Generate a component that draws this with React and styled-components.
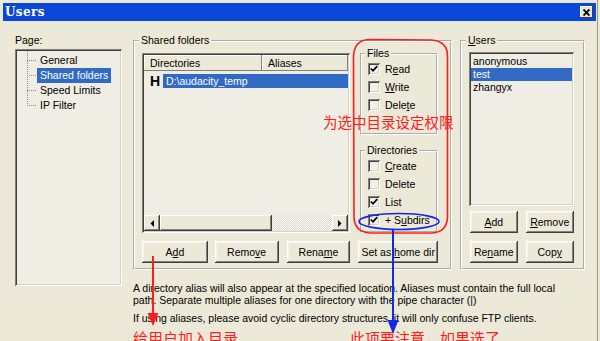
import React from 'react';
import styled, { createGlobalStyle } from 'styled-components';

const FONT = `"Liberation Sans", Arial, sans-serif`;
const CJK = `"Noto Sans CJK SC", "Noto Sans", sans-serif`;

const Global = createGlobalStyle`
  html, body { margin: 0; padding: 0; background: #ece9d8; }
  body { width: 600px; height: 341px; overflow: hidden; }
`;

const Window = styled.div`
  position: relative;
  box-sizing: border-box;
  width: 600px;
  height: 341px;
  padding: 3px 4px 0 3px;
  background: #ece9d8;
  font-family: ${FONT};
  font-size: 10.5px;
  line-height: 13px;
  color: #000;
  overflow: hidden;
  box-shadow: inset -2px 0 0 #ece9d8, inset -3px 0 0 #9c9a8c;
`;

const TitleBar = styled.div`
  height: 18px;
  background: #0a46d8;
  display: flex;
  align-items: center;
  justify-content: space-between;
  padding: 0 3px 0 2px;
`;

const Title = styled.span`
  color: #fff;
  font-family: "DejaVu Serif", "Liberation Serif", serif;
  font-weight: bold;
  font-size: 12px;
  letter-spacing: 0.4px;
`;

const CloseBtn = styled.span`
  box-sizing: border-box;
  width: 13px;
  height: 12px;
  display: flex;
  align-items: center;
  justify-content: center;
  background: #e6e4dc;
  box-shadow: inset -1px -1px #404040, inset 1px 1px #fff;
`;

const Body = styled.div`
  display: grid;
  grid-template-columns: 107px 452px;
  column-gap: 11px;
  padding: 13px 0 0 12px;
`;

const PagePane = styled.div`
  grid-row: span 2;
  display: flex;
  flex-direction: column;
  gap: 2px;
`;

const sunken = `
  box-shadow: inset 1px 1px #808080, inset -1px -1px #fff, inset 2px 2px #404040, inset -2px -2px #d4d0c8;
`;

const TreeBox = styled.div`
  box-sizing: border-box;
  height: 237px;
  background: #efede4;
  padding: 4px 0 0 22px;
  ${sunken}
`;

const TreeList = styled.div`
  position: relative;
  &::before {
    content: '';
    position: absolute;
    left: -10px;
    top: -2px;
    bottom: 7px;
    border-left: 1px dotted #8a8a8a;
  }
`;

const TreeItem = styled.div`
  position: relative;
  width: fit-content;
  height: 15px;
  line-height: 15px;
  padding: 0 3px;
  background: ${p => (p.$sel ? '#316ac5' : 'transparent')};
  color: ${p => (p.$sel ? '#fff' : '#000')};
  &::before {
    content: '';
    position: absolute;
    left: -10px;
    top: 7px;
    width: 9px;
    border-top: 1px dotted #8a8a8a;
  }
`;

const TopRow = styled.div`
  display: flex;
  gap: 8px;
  align-items: stretch;
`;

const Group = styled.fieldset`
  margin: 0;
  min-width: 0;
  box-sizing: border-box;
  width: ${p => p.$w}px;
  border: 2px groove #fff;
  padding: 0 ${p => p.$pr}px ${p => p.$pb}px ${p => p.$pl}px;
  display: flex;
  flex-direction: column;
`;

const Legend = styled.legend`
  padding: 0 2px;
  margin-left: -3px;
  line-height: 13px;
`;

const SharedTop = styled.div`
  display: flex;
  gap: 10px;
  height: 186px;
`;

const ListView = styled.div`
  box-sizing: border-box;
  width: 208px;
  height: 180px;
  margin-top: 6px;
  padding: 2px;
  background: #efede4;
  display: flex;
  flex-direction: column;
  ${sunken}
`;

const Header = styled.div`
  display: flex;
  height: 16px;
`;

const HeaderCell = styled.div`
  box-sizing: border-box;
  width: ${p => p.$w}px;
  flex: ${p => (p.$grow ? 1 : 'none')};
  padding-left: 6px;
  line-height: 16px;
  background: #ece9d8;
  box-shadow: inset -1px -1px #808080, inset 1px 1px #fff;
`;

const Rows = styled.div`
  flex: 1;
  padding-top: 3px;
`;

const Row = styled.div`
  display: flex;
  align-items: center;
  height: 14px;
  padding-left: 6px;
`;

const RowIcon = styled.span`
  width: 13px;
  font-weight: bold;
  font-size: 14px;
`;

const RowSel = styled.span`
  flex: 1;
  height: 14px;
  line-height: 14px;
  padding-left: 3px;
  background: #316ac5;
  color: #fff;
`;

const ScrollBar = styled.div`
  display: flex;
  height: 16px;
`;

const ScrollBtn = styled.div`
  box-sizing: border-box;
  width: 16px;
  display: flex;
  align-items: center;
  justify-content: center;
  background: #ece9d8;
  box-shadow: inset -1px -1px #404040, inset 1px 1px #fff, inset -2px -2px #808080;
`;

const Thumb = styled.div`
  box-sizing: border-box;
  width: ${p => p.$w}px;
  background: #ece9d8;
  box-shadow: inset -1px -1px #404040, inset 1px 1px #fff, inset -2px -2px #808080;
`;

const Track = styled.div`
  flex: 1;
  background-image: repeating-conic-gradient(#ffffff 0 25%, #d9d6c9 0 50%);
  background-size: 2px 2px;
`;

const PermColumn = styled.div`
  display: flex;
  flex-direction: column;
  gap: 9px;
  width: 78px;
`;

const CheckRow = styled.div`
  display: flex;
  align-items: center;
  gap: 5px;
  height: 18px;
`;

const Box = styled.span`
  box-sizing: border-box;
  width: 12px;
  height: 12px;
  display: flex;
  align-items: center;
  justify-content: center;
  background: #f1efe7;
  box-shadow: inset 1px 1px #808080, inset -1px -1px #fff, inset 2px 2px #404040, inset -2px -2px #d4d0c8;
`;

const ButtonRow = styled.div`
  display: flex;
  gap: ${p => p.$gap || 8}px;
  margin-top: ${p => p.$mt || 0}px;
  margin-left: ${p => p.$ml || 0}px;
`;

const Btn = styled.button`
  box-sizing: border-box;
  width: ${p => p.$w}px;
  height: 22px;
  margin: 0;
  padding: 0;
  border: none;
  background: #ece9d8;
  font: inherit;
  color: #000;
  white-space: nowrap;
  box-shadow: inset -1px -1px #404040, inset 1px 1px #fff, inset -2px -2px #808080, inset 2px 2px #f6f4ec;
`;

const ListBox = styled.div`
  box-sizing: border-box;
  height: 154px;
  margin-top: 5px;
  padding: 3px 2px 2px;
  background: #efede4;
  ${sunken}
`;

const ListItem = styled.div`
  height: 13px;
  line-height: 13px;
  padding-left: 2px;
  background: ${p => (p.$sel ? '#316ac5' : 'transparent')};
  color: ${p => (p.$sel ? '#fff' : '#000')};
`;

const Notes = styled.div`
  grid-column: 2;
  margin-top: 12px;
`;

const Para = styled.p`
  margin: ${p => p.$mt || 0}px 0 0;
  line-height: 12px;
  white-space: nowrap;
`;

const AnnoRow = styled.div`
  display: grid;
  grid-template-columns: 217px auto;
  margin-top: 5px;
`;

const AnnoText = styled.span`
  font-family: ${CJK};
  font-size: 15px;
  line-height: 17px;
  color: #ff1c1c;
  white-space: nowrap;
`;

const FloatingNote = styled.span`
  position: absolute;
  left: 323px;
  top: 113px;
  font-family: ${CJK};
  font-size: 14.5px;
  line-height: 17px;
  color: #ff1c1c;
  white-space: nowrap;
  z-index: 2;
`;

const Overlay = styled.svg`
  position: absolute;
  left: 0;
  top: 0;
  width: 600px;
  height: 341px;
  pointer-events: none;
  z-index: 3;
`;

const Check = () => (
  <svg width="8" height="8" viewBox="0 0 8 8">
    <polyline points="0.8,3.5 3,5.8 7.2,1.2" fill="none" stroke="#000" strokeWidth="1.8" />
  </svg>
);

const CheckItem = ({ checked, children }) => (
  <CheckRow>
    <Box>{checked && <Check />}</Box>
    <span>{children}</span>
  </CheckRow>
);

const Arrow = ({ dir }) => (
  <svg width="4" height="7" viewBox="0 0 4 7">
    {dir === 'left' ? <polygon points="4,0 4,7 0.5,3.5" fill="#000" /> : <polygon points="0,0 0,7 3.5,3.5" fill="#000" />}
  </svg>
);

export default function App() {
  return (
    <>
      <Global />
      <Window>
        <TitleBar>
          <Title>Users</Title>
          <CloseBtn>
            <svg width="7" height="7" viewBox="0 0 7 7">
              <path d="M0.5 0.5 L6.5 6.5 M6.5 0.5 L0.5 6.5" stroke="#000" strokeWidth="1.8" />
            </svg>
          </CloseBtn>
        </TitleBar>
        <Body>
          <PagePane>
            <span>Page:</span>
            <TreeBox>
              <TreeList>
                <TreeItem>General</TreeItem>
                <TreeItem $sel>Shared folders</TreeItem>
                <TreeItem>Speed Limits</TreeItem>
                <TreeItem>IP Filter</TreeItem>
              </TreeList>
            </TreeBox>
          </PagePane>

          <TopRow>
            <Group $w={319} $pl={7} $pr={12} $pb={5}>
              <Legend>Shared folders</Legend>
              <SharedTop>
                <ListView>
                  <Header>
                    <HeaderCell $w={118}>Directories</HeaderCell>
                    <HeaderCell $grow>Aliases</HeaderCell>
                  </Header>
                  <Rows>
                    <Row>
                      <RowIcon>H</RowIcon>
                      <RowSel>D:\audacity_temp</RowSel>
                    </Row>
                  </Rows>
                  <ScrollBar>
                    <ScrollBtn><Arrow dir="left" /></ScrollBtn>
                    <Thumb $w={112} />
                    <Track />
                    <ScrollBtn><Arrow dir="right" /></ScrollBtn>
                  </ScrollBar>
                </ListView>
                <PermColumn>
                  <Group $w={78} $pl={6} $pr={2} $pb={19}>
                    <Legend>Files</Legend>
                    <CheckItem checked>R<u>e</u>ad</CheckItem>
                    <CheckItem><u>W</u>rite</CheckItem>
                    <CheckItem>Dele<u>t</u>e</CheckItem>
                  </Group>
                  <Group $w={78} $pl={6} $pr={2} $pb={2}>
                    <Legend>Directories</Legend>
                    <CheckItem><u>C</u>reate</CheckItem>
                    <CheckItem>Delete</CheckItem>
                    <CheckItem checked>List</CheckItem>
                    <CheckItem checked>+ S<u>u</u>bdirs</CheckItem>
                  </Group>
                </PermColumn>
              </SharedTop>
              <ButtonRow $mt={8} $gap={7}>
                <Btn $w={66}>A<u>d</u>d</Btn>
                <Btn $w={64}>Remo<u>v</u>e</Btn>
                <Btn $w={64} style={{ marginLeft: 1 }}>Rena<u>m</u>e</Btn>
                <Btn $w={80} style={{ marginLeft: 1 }}>Set as <u>h</u>ome dir</Btn>
              </ButtonRow>
            </Group>

            <Group $w={125} $pl={7} $pr={9} $pb={5}>
              <Legend><u>U</u>sers</Legend>
              <ListBox>
                <ListItem>anonymous</ListItem>
                <ListItem $sel>test</ListItem>
                <ListItem>zhangyx</ListItem>
              </ListBox>
              <ButtonRow $mt={5} $ml={1}>
                <Btn $w={48}><u>A</u>dd</Btn>
                <Btn $w={49}><u>R</u>emove</Btn>
              </ButtonRow>
              <ButtonRow $mt={8} $ml={1}>
                <Btn $w={48}>Re<u>n</u>ame</Btn>
                <Btn $w={49}>Cop<u>y</u></Btn>
              </ButtonRow>
            </Group>
          </TopRow>

          <Notes>
            <Para>
              A directory alias will also appear at the specified location. Aliases must contain the full local
              <br />
              path. Separate multiple aliases for one directory with the pipe character (|)
            </Para>
            <Para $mt={6}>If using aliases, please avoid cyclic directory structures, it will only confuse FTP clients.</Para>
            <AnnoRow>
              <AnnoText>给用户加入目录</AnnoText>
              <AnnoText>此项要注意，如果选了</AnnoText>
            </AnnoRow>
          </Notes>
        </Body>

        <FloatingNote>为选中目录设定权限</FloatingNote>

        <Overlay viewBox="0 0 600 341">
          <path
            d="M369 39.5 L431 40 Q448 41 447.5 57 L447.5 217 Q447 232 432 233 L370 233 Q354 232 354 216 L353.5 57 Q354 40 369 39.5 Z"
            fill="none"
            stroke="#ff1c1c"
            strokeWidth="1.6"
          />
          <ellipse cx="399" cy="221.5" rx="40" ry="8" fill="none" stroke="#1428e6" strokeWidth="1.6" />
          <line x1="393" y1="229" x2="393" y2="321" stroke="#1428e6" strokeWidth="2" />
          <polygon points="387.5,320 398.5,320 393,334" fill="#1428e6" />
          <line x1="153" y1="256" x2="153" y2="314" stroke="#ff1c1c" strokeWidth="2" />
          <polygon points="147.5,313 158.5,313 153,326" fill="#ff1c1c" />
        </Overlay>
      </Window>
    </>
  );
}
